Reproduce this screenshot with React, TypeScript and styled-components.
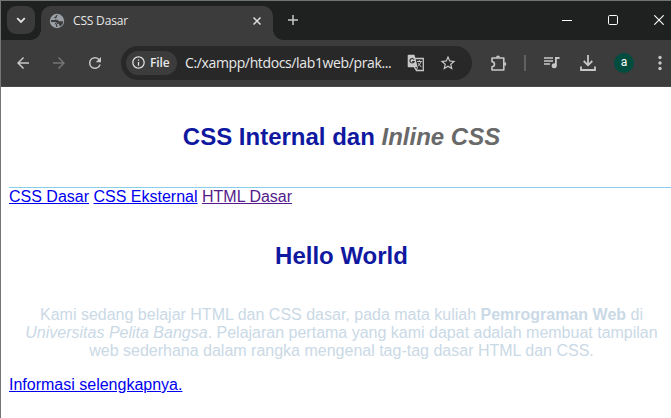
import React from "react";
import styled, { createGlobalStyle } from "styled-components";

const GlobalStyle = createGlobalStyle`
  html, body { margin: 0; padding: 0; background: #fff; overflow: hidden; }
  *, *::before, *::after { box-sizing: border-box; }
`;

const Window = styled.div`
  width: 671px;
  height: 418px;
  overflow: hidden;
  display: flex;
  flex-direction: column;
  background: #fff;
  border-top: 1px solid #6f7371;
  border-left: 1px solid #757575;
`;

const TabStrip = styled.div`
  flex: none;
  display: flex;
  height: 39px;
  background: #1f2120;
`;

const TabSearchArea = styled.div`
  flex: none;
  width: 40px;
  padding: 5px 0 0 6px;
`;

const TabSearch = styled.button`
  display: flex;
  align-items: center;
  justify-content: center;
  width: 28px;
  height: 28px;
  padding: 0;
  border: 0;
  border-radius: 9px;
  background: #3b3b3b;
`;

const Tab = styled.div`
  flex: none;
  position: relative;
  display: flex;
  align-items: center;
  width: 232px;
  height: 34px;
  margin-top: 5px;
  padding: 0 11px 5px 8px;
  border-radius: 10px 10px 0 0;
  background: #3c3c3c;
  &::before,
  &::after {
    content: "";
    position: absolute;
    bottom: 0;
    width: 10px;
    height: 10px;
  }
  &::before {
    left: -10px;
    background: radial-gradient(circle at 0 0, transparent 9.5px, #3c3c3c 10px);
  }
  &::after {
    right: -10px;
    background: radial-gradient(circle at 100% 0, transparent 9.5px, #3c3c3c 10px);
  }
`;

const TabTitle = styled.span`
  flex: 1;
  margin-left: 8px;
  font: 12px/16px "Open Sans", "Noto Sans", sans-serif;
  letter-spacing: -0.18px;
  color: #e6e6e6;
`;

const NewTab = styled.div`
  flex: none;
  display: flex;
  align-items: center;
  justify-content: center;
  width: 40px;
  height: 38px;
`;

const WindowControls = styled.div`
  flex: none;
  display: flex;
  align-items: center;
  height: 38px;
  margin-left: 231px;
`;

const ControlButton = styled.div`
  flex: none;
  display: flex;
  justify-content: center;
  width: 46px;
`;

const Toolbar = styled.div`
  flex: none;
  display: flex;
  align-items: center;
  height: 47px;
  padding: 0 0 1px 4px;
  background: #3c3c3c;
  border-bottom: 1px solid #4a4a4a;
`;

const ToolSlot = styled.div<{ $width?: number }>`
  flex: none;
  display: flex;
  align-items: center;
  justify-content: center;
  width: ${(p) => p.$width ?? 36}px;
  height: 34px;
`;

const AddressBar = styled.div`
  flex: none;
  display: flex;
  align-items: center;
  width: 351px;
  height: 34px;
  margin: 0 9px 0 8px;
  padding: 0 8px 0 5px;
  border-radius: 17px;
  background: #282828;
`;

const SchemeChip = styled.div`
  flex: none;
  display: flex;
  align-items: center;
  gap: 4px;
  width: 51px;
  height: 24px;
  padding-left: 5px;
  border-radius: 12px;
  background: #3c3c3c;
  font: 600 12px/16px "Open Sans", "Noto Sans", sans-serif;
  letter-spacing: -0.1px;
  color: #e8e8e8;
`;

const Address = styled.span`
  flex: 1;
  min-width: 0;
  margin-left: 8px;
  white-space: nowrap;
  font: 14px/20px "Open Sans", "Noto Sans", sans-serif;
  letter-spacing: -0.37px;
  color: #e8e8e8;
`;

const ToolDivider = styled.div`
  width: 2px;
  height: 16px;
  background: #606060;
`;

const Avatar = styled.div`
  width: 20px;
  height: 20px;
  border-radius: 50%;
  background: #004d40;
  text-align: center;
  font: 400 12px/19px Roboto, sans-serif;
  color: #fff;
`;

const Page = styled.main`
  flex: none;
  width: 681px;
  padding: 0 8px;
  font: 16px/18px "Liberation Sans", Arial, sans-serif;
`;

const PageHeader = styled.header`
  height: 101px;
  padding-top: 36px;
  border-bottom: 1px solid #87ceeb;
`;

const Title = styled.h1`
  margin: 0;
  text-align: center;
  font-size: 24px;
  line-height: 27px;
  color: #0f189f;
  i { color: #696969; }
`;

const Nav = styled.nav`
  height: 18px;
`;

const PageLink = styled.a<{ $visited?: boolean }>`
  color: ${(p) => (p.$visited ? "#551a8b" : "#0000ee")};
  text-decoration: underline;
`;

const Section = styled.section`
  padding-top: 36px;
`;

const Paragraph = styled.p`
  margin: 37px 0 16px;
  text-align: center;
  color: #cad9e6;
`;

const PageBody = styled.div`
  width: 665px;
`;

const Icon = ({ d, size = 20, color = "#c7c7c7" }: { d: string; size?: number; color?: string }) => (
  <svg width={size} height={size} viewBox="0 0 24 24" fill={color}>
    <path d={d} />
  </svg>
);

const icons = {
  back: "M20 11H7.83l5.59-5.59L12 4l-8 8 8 8 1.41-1.41L7.83 13H20v-2z",
  forward: "M12 4l-1.41 1.41L16.17 11H4v2h12.17l-5.58 5.59L12 20l8-8z",
  reload:
    "M17.65 6.35A7.96 7.96 0 0 0 12 4a8 8 0 1 0 7.73 10h-2.08A6 6 0 1 1 12 6c1.66 0 3.14.69 4.22 1.78L13 11h7V4l-2.35 2.35z",
  info: "M11 7h2v2h-2zm0 4h2v6h-2zm1-9C6.48 2 2 6.48 2 12s4.48 10 10 10 10-4.48 10-10S17.52 2 12 2zm0 18c-4.41 0-8-3.59-8-8s3.59-8 8-8 8 3.59 8 8-3.59 8-8 8z",
  star: "M22 9.24l-7.19-.62L12 2 9.19 8.63 2 9.24l5.46 4.73L5.82 21 12 17.27 18.18 21l-1.63-7.03L22 9.24zM12 15.4l-3.76 2.27 1-4.28-3.32-2.88 4.38-.38L12 6.1l1.71 4.04 4.38.38-3.32 2.88 1 4.28L12 15.4z",
};

const Globe = () => (
  <svg width="16" height="16" viewBox="0 0 16 16">
    <circle cx="8" cy="8" r="7.2" fill="#9aa0a6" />
    <path
      d="M9.4 2.2c-1.5.2-1.7 1-1.5 1.9.2.8-1.3.7-1.5 1.5-.2.9.6 1.2 1.6 1.1 1.3 0 1.2 1.5 2.5 1.5h3.7c-.1 2.3-1.4 4.3-3.3 5.2-.5-.7-.2-1.5-.7-2-.7-.6-1.7-.1-2-.9-.3-1-.9-1.6-2-1.6H2c0-.7 0-1.300.2-2h3.500c1.300 0 1-1.500 0-1.700-.8-.2-.5-1.500.4-1.500.9 0 .8-1 1.600-1.600z"
      fill="#3c3c3c"
    />
    <path d="M6.500 9.800c.2 1.800.8 1.300 1.200 2.200.3.800-.2 1.300-.2 2" fill="none" stroke="#3c3c3c" strokeWidth="1.200" />
  </svg>
);

const Translate = () => (
  <svg width="18" height="18" viewBox="0 0 18 18">
    <path d="M7 4.5h9.3v12H9.5L7.3 13" fill="#282828" stroke="#c7c7c7" strokeWidth="1.3" />
    <path d="M1.5.8h6l3.2 12.4H1.5a.8.8 0 0 1-.8-.8V1.6a.8.8 0 0 1 .8-.8z" fill="#c7c7c7" />
    <path d="M7 5.600A2.200 2.200 0 1 0 7.200 7.500H5.200" fill="none" stroke="#282828" strokeWidth="1.100" />
    <path d="M10 7.500h5M12.300 6.200v1.300M14 7.500c-.5 2-1.700 3.200-3 4.300M11.200 9.200l3.200 4M10.500 13.200l-1 3" fill="none" stroke="#c7c7c7" strokeWidth="1" />
  </svg>
);

const Puzzle = () => (
  <svg width="18" height="18" viewBox="0 0 18 18">
    <path
      d="M2 4h11.800v12H2v-3.300a2.100 2.100 0 0 0 0-4.900z"
      fill="none"
      stroke="#c7c7c7"
      strokeWidth="1.600"
      strokeLinejoin="round"
    />
    <path d="M6 3.500a2 2 0 0 1 4 0zM14.300 8a2 2 0 0 1 0 4z" fill="#c7c7c7" />
  </svg>
);

const MediaQueue = () => (
  <svg width="16" height="14" viewBox="0 0 16 14">
    <path d="M0 2h9M0 5h9M0 8h6" stroke="#c7c7c7" strokeWidth="1.500" />
    <path d="M11 1h4.500v2h-2.700v6.500H11z" fill="#c7c7c7" />
    <circle cx="10.200" cy="9.700" r="2.500" fill="#c7c7c7" />
  </svg>
);

const Download = () => (
  <svg width="16" height="18" viewBox="0 0 16 18" fill="none" stroke="#c7c7c7" strokeWidth="1.800">
    <path d="M8 1v10M3.700 7 8 11.300 12.300 7M1 12.500V16h14v-3.500" />
  </svg>
);

export default function App() {
  return (
    <>
      <GlobalStyle />
      <Window>
        <TabStrip>
          <TabSearchArea>
            <TabSearch aria-label="Search tabs">
              <svg width="10" height="8" viewBox="0 0 10 8" fill="none" stroke="#e3e3e3" strokeWidth="1.800">
                <path d="M1.200 2.200 5 6l3.800-3.800" />
              </svg>
            </TabSearch>
          </TabSearchArea>
          <Tab>
            <Globe />
            <TabTitle>CSS Dasar</TabTitle>
            <svg width="10" height="10" viewBox="0 0 10 10" stroke="#dedede" strokeWidth="1.500">
              <path d="m1.500 1.500 7 7m0-7-7 7" />
            </svg>
          </Tab>
          <NewTab>
            <svg width="12" height="12" viewBox="0 0 12 12" stroke="#c7c7c7" strokeWidth="1.500">
              <path d="M6 1v10M1 6h10" />
            </svg>
          </NewTab>
          <WindowControls>
            <ControlButton>
              <svg width="10" height="11" viewBox="0 0 10 11" stroke="#fff">
                <path d="M0 5.500h10" />
              </svg>
            </ControlButton>
            <ControlButton>
              <svg width="10" height="10" viewBox="0 0 10 10" fill="none" stroke="#fff">
                <rect x=".5" y=".5" width="9" height="9" rx="1.200" />
              </svg>
            </ControlButton>
            <ControlButton>
              <svg width="10" height="10" viewBox="0 0 10 10" stroke="#fff" strokeWidth="1.100">
                <path d="m.3.300 9.400 9.400m0-9.400L.3 9.700" />
              </svg>
            </ControlButton>
          </WindowControls>
        </TabStrip>
        <Toolbar>
          <ToolSlot><Icon d={icons.back} size={18} /></ToolSlot>
          <ToolSlot><Icon d={icons.forward} size={18} color="#747474" /></ToolSlot>
          <ToolSlot><Icon d={icons.reload} size={18} /></ToolSlot>
          <AddressBar>
            <SchemeChip>
              <Icon d={icons.info} size={15} color="#e3e3e3" />
              File
            </SchemeChip>
            <Address>C:/xampp/htdocs/lab1web/prak...</Address>
            <ToolSlot $width={32}><Translate /></ToolSlot>
            <ToolSlot $width={32}><Icon d={icons.star} size={18} /></ToolSlot>
          </AddressBar>
          <ToolSlot><Puzzle /></ToolSlot>
          <ToolSlot $width={16}><ToolDivider /></ToolSlot>
          <ToolSlot $width={38}><MediaQueue /></ToolSlot>
          <ToolSlot $width={34}><Download /></ToolSlot>
          <ToolSlot $width={38}><Avatar>a</Avatar></ToolSlot>
          <ToolSlot $width={34}>
            <svg width="4" height="16" viewBox="0 0 4 16" fill="#c7c7c7">
              <circle cx="2" cy="2.500" r="1.700" />
              <circle cx="2" cy="8" r="1.700" />
              <circle cx="2" cy="13.500" r="1.700" />
            </svg>
          </ToolSlot>
        </Toolbar>
        <Page>
          <PageBody>
            <PageHeader>
              <Title>CSS Internal dan <i>Inline CSS</i></Title>
            </PageHeader>
            <Nav>
              <PageLink>CSS Dasar</PageLink>{" "}
              <PageLink>CSS Eksternal</PageLink>{" "}
              <PageLink $visited>HTML Dasar</PageLink>
            </Nav>
            <Section>
              <Title as="h2">Hello World</Title>
              <Paragraph>
                Kami sedang belajar HTML dan CSS dasar, pada mata kuliah <b>Pemrograman Web</b> di{" "}
                <i>Universitas Pelita Bangsa</i>. Pelajaran pertama yang kami dapat adalah membuat
                tampilan web sederhana dalam rangka mengenal tag-tag dasar HTML dan CSS.
              </Paragraph>
              <PageLink>Informasi selengkapnya.</PageLink>
            </Section>
          </PageBody>
        </Page>
      </Window>
    </>
  );
}
